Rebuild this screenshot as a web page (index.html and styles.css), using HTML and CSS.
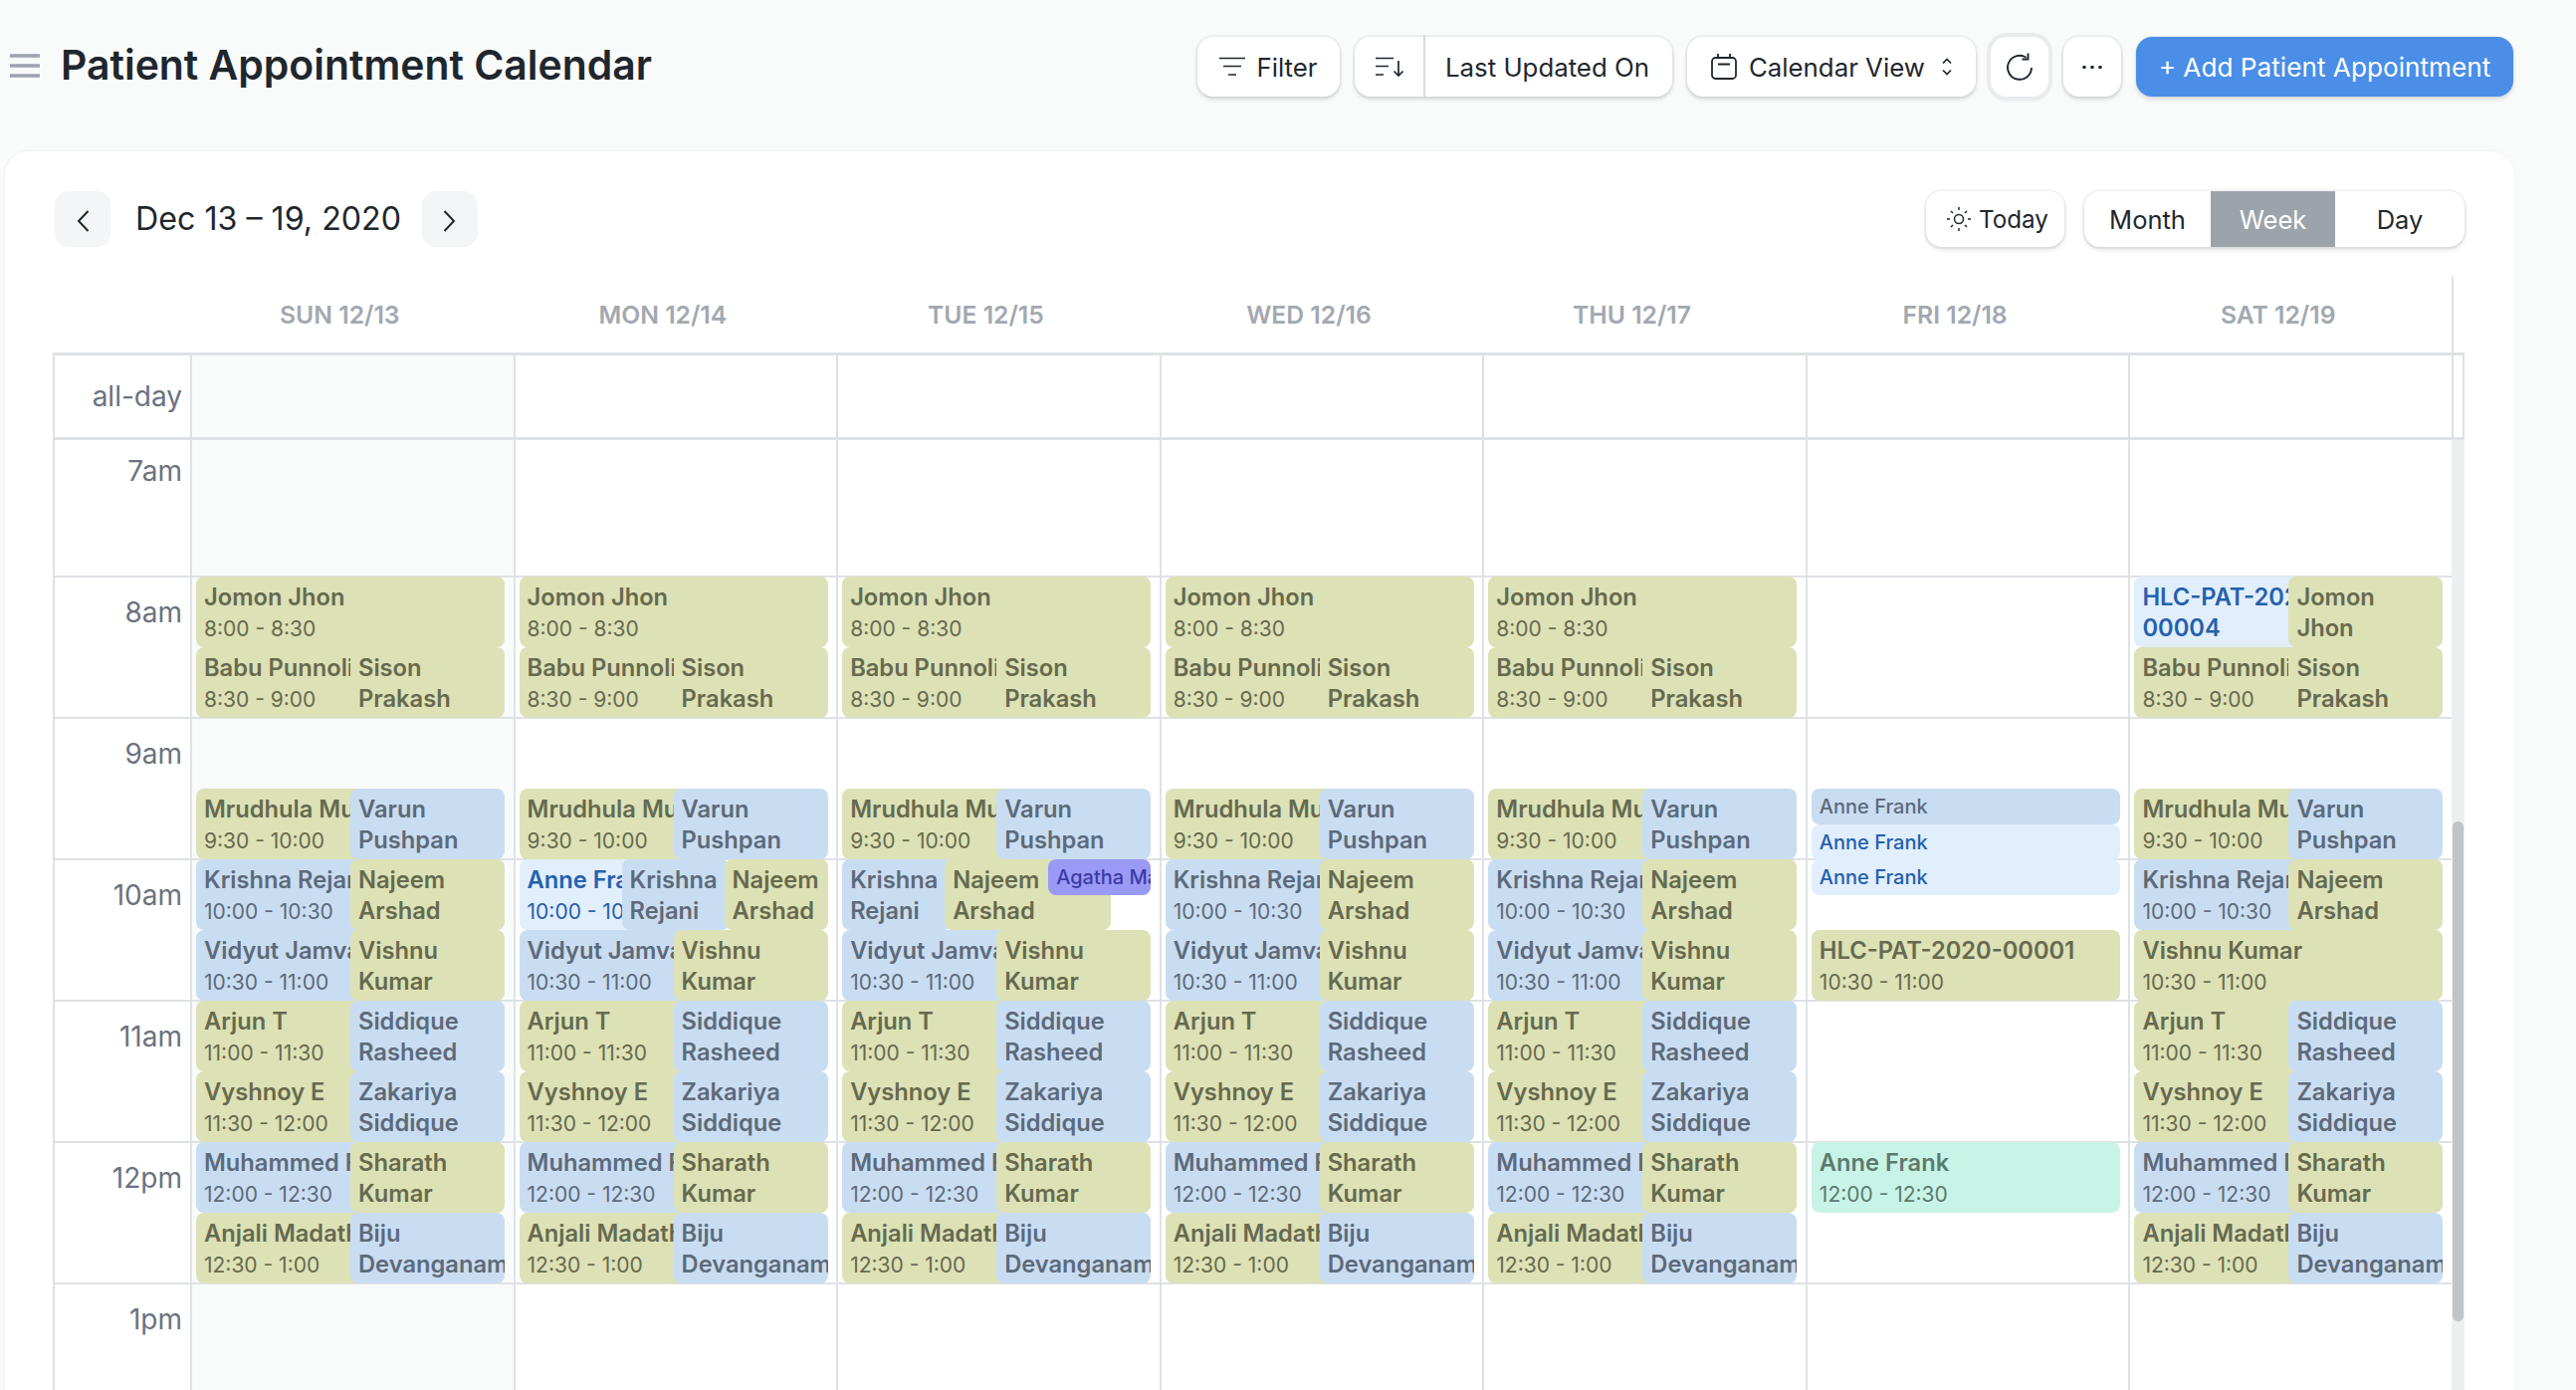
FILE: index.html
```html
<!DOCTYPE html>
<html lang="en">
<head>
<meta charset="utf-8">
<title>Patient Appointment Calendar</title>
<link rel="stylesheet" href="styles.css">
</head>
<body>
<div class="page">
  <header class="topbar">
    <div class="title-wrap">
      <svg class="burger" width="30" height="24" viewBox="0 0 30 24"><path d="M0 2h30M0 12h30M0 22h30" stroke="#9ca3af" stroke-width="3.4" fill="none"/></svg>
      <h1>Patient Appointment Calendar</h1>
    </div>
    <div class="actions">
      <button class="btn filter"><svg width="26" height="20" viewBox="0 0 26 20" fill="none" stroke="#1f272e" stroke-width="1.7"><path d="M0 1.5h26M4 9.500h18M9 18h8"/></svg>Filter</button>
      <div class="btn sortgrp">
        <span class="sort-ic"><svg width="28" height="20" viewBox="0 0 28 20" fill="none" stroke="#1f272e" stroke-width="1.7"><path d="M0 1.500h18M0 9.500h13M0 18h8M23 4v15M18.500 14.500l4.500 4.500 4.500-4.500"/></svg></span>
        <span class="sort-lbl">Last Updated On</span>
      </div>
      <button class="btn view"><svg width="26" height="26" viewBox="0 0 26 26" fill="none" stroke="#1f272e" stroke-width="1.8"><rect x="1" y="4" width="24" height="21" rx="3.500"/><path d="M7 10.500h12M7 0v4M19 0v4"/></svg>Calendar View<svg class="updown" width="10" height="18" viewBox="0 0 10 18" fill="none" stroke="#1f272e" stroke-width="1.700"><path d="M1 5.500l4-4 4 4M1 12.500l4 4 4-4"/></svg></button>
      <button class="btn icon ring"><svg width="26" height="28" viewBox="0 0 26 28" fill="none" stroke="#1f272e" stroke-width="1.900"><path d="M19.500 4.700A12 12 0 1 0 25 15M21.500 0.500v6h-6"/></svg></button>
      <button class="btn icon"><svg width="20" height="5" viewBox="0 0 20 5" fill="#1f272e"><circle cx="2" cy="2.500" r="1.800"/><circle cx="10" cy="2.500" r="1.800"/><circle cx="18" cy="2.500" r="1.800"/></svg></button>
      <button class="btn primary">+ Add Patient Appointment</button>
    </div>
  </header>

  <main class="card">
    <div class="cal-toolbar">
      <div class="range">
        <button class="nav"><svg class="chev" width="14" height="24" viewBox="0 0 14 24" fill="none" stroke="#1f272e" stroke-width="2"><path d="M12.500 2L3 12l9.500 10"/></svg></button>
        <h2>Dec 13 – 19, 2020</h2>
        <button class="nav"><svg class="chev" width="14" height="24" viewBox="0 0 14 24" fill="none" stroke="#1f272e" stroke-width="2"><path d="M1.500 2L11 12l-9.500 10"/></svg></button>
      </div>
      <div class="modes">
        <button class="btn today"><svg width="26" height="26" viewBox="0 0 26 26" fill="none" stroke="#1f272e" stroke-width="1.500"><circle cx="13" cy="13" r="4.500"/><path d="M13 1v3M13 22v3M1 13h3M22 13h3M5 5l2 2M19 19l2 2M5 21l2-2M19 7l2-2"/></svg>Today</button>
        <div class="btn seg">
          <span>Month</span><span class="on">Week</span><span>Day</span>
        </div>
      </div>
    </div>

    <div class="heads">
      <div class="head-axis"></div>
      <div class="head">SUN 12/13</div><div class="head">MON 12/14</div><div class="head">TUE 12/15</div><div class="head">WED 12/16</div><div class="head">THU 12/17</div><div class="head">FRI 12/18</div><div class="head">SAT 12/19</div>
      <div class="head-end"></div>
    </div>

    <div class="allday">
      <div class="axis-cell">all-day</div>
      <div class="ad-cell sun"></div><div class="ad-cell"></div><div class="ad-cell"></div><div class="ad-cell"></div><div class="ad-cell"></div><div class="ad-cell"></div><div class="ad-cell"></div>
      <div class="ad-end"></div>
    </div>

    <div class="scroller">
      <div class="grid">
        <div class="axis">
          <div class="hour">7am</div><div class="hour">8am</div><div class="hour">9am</div><div class="hour">10am</div><div class="hour">11am</div><div class="hour">12pm</div><div class="hour">1pm</div><div class="hour">2pm</div>
        </div>

        <div class="day sun">
          <div class="hour"></div><div class="hour"></div><div class="hour"></div><div class="hour"></div><div class="hour"></div><div class="hour"></div><div class="hour"></div><div class="hour"></div>
          <div class="ev olive full t800"><div class="nm">Jomon Jhon</div><div class="tm">8:00 - 8:30</div></div>
          <div class="ev olive left t830"><div class="nm">Babu Punnoli</div><div class="tm">8:30 - 9:00</div></div>
          <div class="ev olive right t830"><div class="nm">Sison Prakash</div></div>
          <div class="ev olive left t930"><div class="nm">Mrudhula Murali</div><div class="tm">9:30 - 10:00</div></div>
          <div class="ev blue right t930"><div class="nm">Varun Pushpan</div></div>
          <div class="ev blue left t1000"><div class="nm">Krishna Rejani</div><div class="tm">10:00 - 10:30</div></div>
          <div class="ev olive right t1000"><div class="nm">Najeem Arshad</div></div>
          <div class="ev blue left t1030"><div class="nm">Vidyut Jamval</div><div class="tm">10:30 - 11:00</div></div>
          <div class="ev olive right t1030"><div class="nm">Vishnu Kumar</div></div>
          <div class="ev olive left t1100"><div class="nm">Arjun T</div><div class="tm">11:00 - 11:30</div></div>
          <div class="ev blue right t1100"><div class="nm">Siddique Rasheed</div></div>
          <div class="ev olive left t1130"><div class="nm">Vyshnoy E</div><div class="tm">11:30 - 12:00</div></div>
          <div class="ev blue right t1130"><div class="nm">Zakariya Siddique</div></div>
          <div class="ev blue left t1200"><div class="nm">Muhammed Faiz</div><div class="tm">12:00 - 12:30</div></div>
          <div class="ev olive right t1200"><div class="nm">Sharath Kumar</div></div>
          <div class="ev olive left t1230"><div class="nm">Anjali Madathil</div><div class="tm">12:30 - 1:00</div></div>
          <div class="ev blue right t1230"><div class="nm">Biju Devanganam</div></div>
        </div>

        <div class="day">
          <div class="hour"></div><div class="hour"></div><div class="hour"></div><div class="hour"></div><div class="hour"></div><div class="hour"></div><div class="hour"></div><div class="hour"></div>
          <div class="ev olive full t800"><div class="nm">Jomon Jhon</div><div class="tm">8:00 - 8:30</div></div>
          <div class="ev olive left t830"><div class="nm">Babu Punnoli</div><div class="tm">8:30 - 9:00</div></div>
          <div class="ev olive right t830"><div class="nm">Sison Prakash</div></div>
          <div class="ev olive left t930"><div class="nm">Mrudhula Murali</div><div class="tm">9:30 - 10:00</div></div>
          <div class="ev blue right t930"><div class="nm">Varun Pushpan</div></div>
          <div class="ev lite col1 t1000"><div class="nm">Anne Frank</div><div class="tm">10:00 - 10:30</div></div>
          <div class="ev blue col2 t1000"><div class="nm">Krishna Rejani</div></div>
          <div class="ev olive col3 t1000"><div class="nm">Najeem Arshad</div></div>
          <div class="ev blue left t1030"><div class="nm">Vidyut Jamval</div><div class="tm">10:30 - 11:00</div></div>
          <div class="ev olive right t1030"><div class="nm">Vishnu Kumar</div></div>
          <div class="ev olive left t1100"><div class="nm">Arjun T</div><div class="tm">11:00 - 11:30</div></div>
          <div class="ev blue right t1100"><div class="nm">Siddique Rasheed</div></div>
          <div class="ev olive left t1130"><div class="nm">Vyshnoy E</div><div class="tm">11:30 - 12:00</div></div>
          <div class="ev blue right t1130"><div class="nm">Zakariya Siddique</div></div>
          <div class="ev blue left t1200"><div class="nm">Muhammed Faiz</div><div class="tm">12:00 - 12:30</div></div>
          <div class="ev olive right t1200"><div class="nm">Sharath Kumar</div></div>
          <div class="ev olive left t1230"><div class="nm">Anjali Madathil</div><div class="tm">12:30 - 1:00</div></div>
          <div class="ev blue right t1230"><div class="nm">Biju Devanganam</div></div>
        </div>

        <div class="day">
          <div class="hour"></div><div class="hour"></div><div class="hour"></div><div class="hour"></div><div class="hour"></div><div class="hour"></div><div class="hour"></div><div class="hour"></div>
          <div class="ev olive full t800"><div class="nm">Jomon Jhon</div><div class="tm">8:00 - 8:30</div></div>
          <div class="ev olive left t830"><div class="nm">Babu Punnoli</div><div class="tm">8:30 - 9:00</div></div>
          <div class="ev olive right t830"><div class="nm">Sison Prakash</div></div>
          <div class="ev olive left t930"><div class="nm">Mrudhula Murali</div><div class="tm">9:30 - 10:00</div></div>
          <div class="ev blue right t930"><div class="nm">Varun Pushpan</div></div>
          <div class="ev blue tue1 t1000"><div class="nm">Krishna Rejani</div></div>
          <div class="ev olive tue2 t1000"><div class="nm">Najeem Arshad</div></div>
          <div class="ev violet small tue3 t1000"><div class="nm">Agatha Mary</div></div>
          <div class="ev blue left t1030"><div class="nm">Vidyut Jamval</div><div class="tm">10:30 - 11:00</div></div>
          <div class="ev olive right t1030"><div class="nm">Vishnu Kumar</div></div>
          <div class="ev olive left t1100"><div class="nm">Arjun T</div><div class="tm">11:00 - 11:30</div></div>
          <div class="ev blue right t1100"><div class="nm">Siddique Rasheed</div></div>
          <div class="ev olive left t1130"><div class="nm">Vyshnoy E</div><div class="tm">11:30 - 12:00</div></div>
          <div class="ev blue right t1130"><div class="nm">Zakariya Siddique</div></div>
          <div class="ev blue left t1200"><div class="nm">Muhammed Faiz</div><div class="tm">12:00 - 12:30</div></div>
          <div class="ev olive right t1200"><div class="nm">Sharath Kumar</div></div>
          <div class="ev olive left t1230"><div class="nm">Anjali Madathil</div><div class="tm">12:30 - 1:00</div></div>
          <div class="ev blue right t1230"><div class="nm">Biju Devanganam</div></div>
        </div>

        <div class="day">
          <div class="hour"></div><div class="hour"></div><div class="hour"></div><div class="hour"></div><div class="hour"></div><div class="hour"></div><div class="hour"></div><div class="hour"></div>
          <div class="ev olive full t800"><div class="nm">Jomon Jhon</div><div class="tm">8:00 - 8:30</div></div>
          <div class="ev olive left t830"><div class="nm">Babu Punnoli</div><div class="tm">8:30 - 9:00</div></div>
          <div class="ev olive right t830"><div class="nm">Sison Prakash</div></div>
          <div class="ev olive left t930"><div class="nm">Mrudhula Murali</div><div class="tm">9:30 - 10:00</div></div>
          <div class="ev blue right t930"><div class="nm">Varun Pushpan</div></div>
          <div class="ev blue left t1000"><div class="nm">Krishna Rejani</div><div class="tm">10:00 - 10:30</div></div>
          <div class="ev olive right t1000"><div class="nm">Najeem Arshad</div></div>
          <div class="ev blue left t1030"><div class="nm">Vidyut Jamval</div><div class="tm">10:30 - 11:00</div></div>
          <div class="ev olive right t1030"><div class="nm">Vishnu Kumar</div></div>
          <div class="ev olive left t1100"><div class="nm">Arjun T</div><div class="tm">11:00 - 11:30</div></div>
          <div class="ev blue right t1100"><div class="nm">Siddique Rasheed</div></div>
          <div class="ev olive left t1130"><div class="nm">Vyshnoy E</div><div class="tm">11:30 - 12:00</div></div>
          <div class="ev blue right t1130"><div class="nm">Zakariya Siddique</div></div>
          <div class="ev blue left t1200"><div class="nm">Muhammed Faiz</div><div class="tm">12:00 - 12:30</div></div>
          <div class="ev olive right t1200"><div class="nm">Sharath Kumar</div></div>
          <div class="ev olive left t1230"><div class="nm">Anjali Madathil</div><div class="tm">12:30 - 1:00</div></div>
          <div class="ev blue right t1230"><div class="nm">Biju Devanganam</div></div>
        </div>

        <div class="day">
          <div class="hour"></div><div class="hour"></div><div class="hour"></div><div class="hour"></div><div class="hour"></div><div class="hour"></div><div class="hour"></div><div class="hour"></div>
          <div class="ev olive full t800"><div class="nm">Jomon Jhon</div><div class="tm">8:00 - 8:30</div></div>
          <div class="ev olive left t830"><div class="nm">Babu Punnoli</div><div class="tm">8:30 - 9:00</div></div>
          <div class="ev olive right t830"><div class="nm">Sison Prakash</div></div>
          <div class="ev olive left t930"><div class="nm">Mrudhula Murali</div><div class="tm">9:30 - 10:00</div></div>
          <div class="ev blue right t930"><div class="nm">Varun Pushpan</div></div>
          <div class="ev blue left t1000"><div class="nm">Krishna Rejani</div><div class="tm">10:00 - 10:30</div></div>
          <div class="ev olive right t1000"><div class="nm">Najeem Arshad</div></div>
          <div class="ev blue left t1030"><div class="nm">Vidyut Jamval</div><div class="tm">10:30 - 11:00</div></div>
          <div class="ev olive right t1030"><div class="nm">Vishnu Kumar</div></div>
          <div class="ev olive left t1100"><div class="nm">Arjun T</div><div class="tm">11:00 - 11:30</div></div>
          <div class="ev blue right t1100"><div class="nm">Siddique Rasheed</div></div>
          <div class="ev olive left t1130"><div class="nm">Vyshnoy E</div><div class="tm">11:30 - 12:00</div></div>
          <div class="ev blue right t1130"><div class="nm">Zakariya Siddique</div></div>
          <div class="ev blue left t1200"><div class="nm">Muhammed Faiz</div><div class="tm">12:00 - 12:30</div></div>
          <div class="ev olive right t1200"><div class="nm">Sharath Kumar</div></div>
          <div class="ev olive left t1230"><div class="nm">Anjali Madathil</div><div class="tm">12:30 - 1:00</div></div>
          <div class="ev blue right t1230"><div class="nm">Biju Devanganam</div></div>
        </div>

        <div class="day">
          <div class="hour"></div><div class="hour"></div><div class="hour"></div><div class="hour"></div><div class="hour"></div><div class="hour"></div><div class="hour"></div><div class="hour"></div>
          <div class="ev blue small full t930"><div class="nm">Anne Frank</div></div>
          <div class="ev lite small full t948"><div class="nm">Anne Frank</div></div>
          <div class="ev lite small full t1000"><div class="nm">Anne Frank</div></div>
          <div class="ev olive full t1030"><div class="nm">HLC-PAT-2020-00001</div><div class="tm">10:30 - 11:00</div></div>
          <div class="ev mint full t1200"><div class="nm">Anne Frank</div><div class="tm">12:00 - 12:30</div></div>
        </div>

        <div class="day">
          <div class="hour"></div><div class="hour"></div><div class="hour"></div><div class="hour"></div><div class="hour"></div><div class="hour"></div><div class="hour"></div><div class="hour"></div>
          <div class="ev lite left t800"><div class="nm">HLC-PAT-2020-00004</div></div>
          <div class="ev olive right t800"><div class="nm">Jomon Jhon</div></div>
          <div class="ev olive left t830"><div class="nm">Babu Punnoli</div><div class="tm">8:30 - 9:00</div></div>
          <div class="ev olive right t830"><div class="nm">Sison Prakash</div></div>
          <div class="ev olive left t930"><div class="nm">Mrudhula Murali</div><div class="tm">9:30 - 10:00</div></div>
          <div class="ev blue right t930"><div class="nm">Varun Pushpan</div></div>
          <div class="ev blue left t1000"><div class="nm">Krishna Rejani</div><div class="tm">10:00 - 10:30</div></div>
          <div class="ev olive right t1000"><div class="nm">Najeem Arshad</div></div>
          <div class="ev olive full t1030"><div class="nm">Vishnu Kumar</div><div class="tm">10:30 - 11:00</div></div>
          <div class="ev olive left t1100"><div class="nm">Arjun T</div><div class="tm">11:00 - 11:30</div></div>
          <div class="ev blue right t1100"><div class="nm">Siddique Rasheed</div></div>
          <div class="ev olive left t1130"><div class="nm">Vyshnoy E</div><div class="tm">11:30 - 12:00</div></div>
          <div class="ev blue right t1130"><div class="nm">Zakariya Siddique</div></div>
          <div class="ev blue left t1200"><div class="nm">Muhammed Faiz</div><div class="tm">12:00 - 12:30</div></div>
          <div class="ev olive right t1200"><div class="nm">Sharath Kumar</div></div>
          <div class="ev olive left t1230"><div class="nm">Anjali Madathil</div><div class="tm">12:30 - 1:00</div></div>
          <div class="ev blue right t1230"><div class="nm">Biju Devanganam</div></div>
        </div>
      </div>
      <div class="track"><div class="thumb"></div></div>
    </div>
  </main>
</div>
</body>
</html>
```

FILE: styles.css
```css
* { box-sizing: border-box; }
html, body { margin: 0; padding: 0; }
body { font-family: "Inter", "Liberation Sans", sans-serif; color: #1f272e; background: #f9fafa; }
button { font: inherit; color: inherit; }

.page { height: 1396px; overflow: hidden; background: #f9fafa; display: flex; flex-direction: column; }

/* top bar */
.topbar { height: 152px; flex: none; display: flex; align-items: flex-start; justify-content: space-between; padding: 37px 63px 0 10px; }
.title-wrap { display: flex; align-items: center; height: 56px; gap: 21px; }
.burger { flex: none; margin-top: 2px; }
h1 { margin: 0; font-size: 40.9px; line-height: 56px; font-weight: 600; color: #1f272e; }
.actions { display: flex; gap: 15px; height: 60px; }

.btn {
  border: 0; background: #fff; border-radius: 16px; height: 60px; padding: 0;
  font-size: 25.8px; color: #1f272e; display: flex; align-items: center; justify-content: center;
  box-shadow: 0 0 0 2px rgba(31,39,46,.05), 0 3px 4px rgba(31,39,46,.13);
  white-space: nowrap;
}
.filter { width: 143px; gap: 11px; }
.sortgrp { width: 319px; justify-content: flex-start; }
.sort-ic { width: 71px; height: 64px; flex: none; display: flex; align-items: center; justify-content: center; border-right: 2px solid #d9dbde; }
.sort-lbl { padding-left: 20px; }
.view { width: 290px; gap: 12px; justify-content: flex-start; padding-left: 24px; }
.updown { margin-left: 5px; }
.icon { width: 58px; }
.ring { box-shadow: 0 0 0 4px #e9ebed, 0 3px 4px rgba(31,39,46,.13); }
.primary { width: 379px; font-size: 26.2px; background: #4a8ee8; color: #fff; box-shadow: 0 0 0 1px rgba(31,39,46,.04), 0 3px 4px rgba(31,39,46,.13); }

/* card */
.card { flex: 1; margin-left: 5px; width: 2521px; background: #fff; border-radius: 24px 24px 0 0; padding: 40px 50px 0 48px; box-shadow: 0 0 3px rgba(31,39,46,.07); overflow: hidden; }
.cal-toolbar { display: flex; justify-content: space-between; align-items: flex-start; height: 56px; margin-left: 2px; }
.range { display: flex; align-items: center; height: 56px; }
.range h2 { margin: 0 21px 0 25px; font-size: 32.2px; font-weight: 400; color: #1f272e; line-height: 56px; }
.nav { width: 56px; height: 56px; border: 0; border-radius: 14px; background: #f4f5f6; display: flex; align-items: center; justify-content: center; padding: 0; }
.chev { margin-top: 4px; }
.modes { display: flex; gap: 20px; }
.today { width: 139px; height: 56px; gap: 7px; justify-content: flex-start; padding-left: 20px; font-size: 24.2px; }
.seg { width: 382px; height: 56px; overflow: hidden; display: grid; grid-template-columns: 127px 125px 1fr; font-size: 25.5px; }
.seg span { height: 100%; display: flex; align-items: center; justify-content: center; }
.seg .on { background: #9ca3ab; color: #fff; }

/* column heads */
.heads { display: grid; grid-template-columns: 126px repeat(7, 324.57px) 1fr; height: 76px; margin-top: 30px; }
.head { display: flex; align-items: center; justify-content: center; font-size: 24.7px; font-weight: 600; color: #a2a8b0; }
.head-end { border-right: 2px solid #dfe2e5; margin-right: 11px; }

/* all-day row */
.allday { display: grid; grid-template-columns: 136px repeat(7, 1fr) 13px; height: 88px; border: 0 solid #dfe2e5; border-width: 3px 0 3px 2px; }
.axis-cell { font-size: 28px; color: #6b7280; text-align: right; padding-right: 8px; line-height: 82px; }
.ad-cell { border-left: 2px solid #dfe2e5; }
.ad-cell.sun { background: #f9fafa; }
.ad-end { border: 0 solid #dfe2e5; border-width: 0 2px; }

/* time grid */
.scroller { display: flex; height: 960px; overflow: hidden; border-left: 2px solid #dfe2e5; }
.grid { flex: 1; display: grid; grid-template-columns: 136px repeat(7, 1fr); margin-top: -4px; align-self: flex-start; }
.axis .hour { font-size: 28px; color: #6b7280; text-align: right; padding: 14px 8px 0 0; line-height: 42px; }
.hour { height: 142px; border-bottom: 2px solid #dfe2e5; }
.day { position: relative; border-left: 2px solid #dfe2e5; }
.day.sun { background: #f9fafa; }
.track { width: 13px; flex: none; background: #eceef0; }
.thumb { width: 11px; height: 502px; margin: 383px 0 0 1px; border-radius: 6px; background: #bfc4c8; }

/* events */
.ev { position: absolute; height: 71px; border-radius: 8px; padding: 5px 8px 0; overflow: hidden; }
.nm { font-size: 23.7px; line-height: 31px; font-weight: 570; }
.tm { font-size: 21px; line-height: 34px; }
.small { height: 36px; padding: 2px 0 0 8px; }
.small .nm { font-size: 20px; line-height: 32px; font-weight: 500; white-space: nowrap; }

.olive { background: #dde1b6; color: #666a4e; }
.blue { background: #c9ddf2; color: #5d6a79; }
.lite { background: #e1eefc; color: #2560ad; }
.mint { background: #c8f4e7; color: #5d7a6e; }
.violet { background: #9a9af6; color: #3b3ba6; }

.full { left: 4px; width: 310px; }
.left { left: 4px; width: 220px; }
.right { left: 159px; width: 155px; }
.col1 { left: 4px; width: 200px; }
.col2 { left: 107px; width: 108px; }
.col3 { left: 210px; width: 104px; }
.tue1 { left: 4px; width: 110px; }
.tue2 { left: 107px; width: 167px; }
.tue3 { left: 211px; width: 103px; }

.t800 { top: 141px; }
.t830 { top: 212px; }
.t930 { top: 354px; }
.t948 { top: 390px; }
.t1000 { top: 425px; }
.t1030 { top: 496px; }
.t1100 { top: 567px; }
.t1130 { top: 638px; }
.t1200 { top: 709px; }
.t1230 { top: 780px; }
```
